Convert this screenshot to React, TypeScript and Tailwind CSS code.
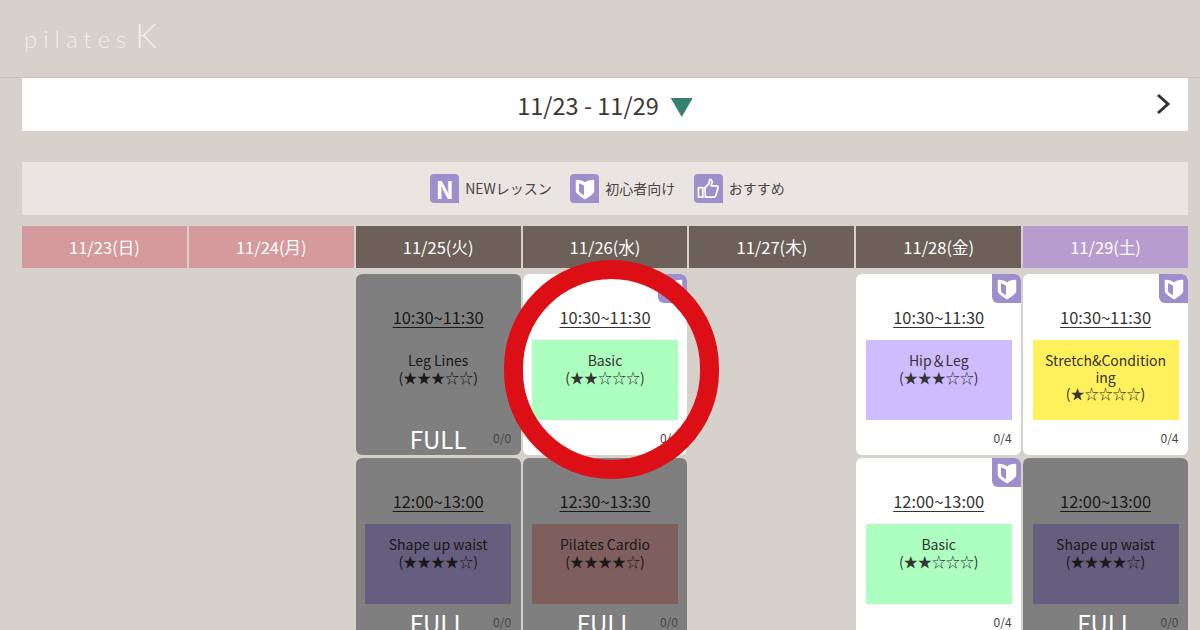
const font = { fontFamily: '"Noto Sans CJK JP", "Noto Sans", sans-serif' };

function BeginnerIcon({ className }: { className: string }) {
  return (
    <svg viewBox="0 0 20 22" className={className}>
      <path
        d="M1.500 2.500C5 2.500 8 3.500 10 5.500 12 3.500 15 2.500 18.500 2.500V13C18.500 15.500 14 18 10 20.500 6 18 1.500 15.500 1.500 13Z"
        fill="#fff"
        stroke="#fff"
        strokeWidth="1.500"
        strokeLinejoin="round"
      />
      <path d="M4 5.500C6 5.800 7.500 6.500 9 7.800V17.300C7 16 4 14.500 4 12.700Z" fill="#9d8fcb" />
    </svg>
  );
}

function ThumbIcon() {
  return (
    <svg viewBox="0 0 30 30" className="h-[26px] w-[28px]">
      <path
        d="M4 13.500h5v11H4zM11.500 13.500l4.500-4.500 1-5c2.600 0 3.300 2.500 2.300 5l-.8 2.500h6.300c1.800 0 2.200 1.700 1.500 3l-2.300 8c-.4 1.300-1.200 2-2.500 2h-9.500z"
        fill="none"
        stroke="#fff"
        strokeWidth="2"
        strokeLinejoin="round"
      />
    </svg>
  );
}

function Legend({ icon, label }: { icon: React.ReactNode; label: string }) {
  return (
    <div className="flex items-center gap-[6px]">
      <div className="flex h-[29px] w-[29px] items-center justify-center rounded-l-[4px] rounded-tr-[4px] bg-[#9d8fcb]">
        {icon}
      </div>
      <span className="text-[14px] text-[#4a4440]">{label}</span>
    </div>
  );
}

type Lesson = {
  time: string;
  name: string;
  stars: string;
  color: string;
  seats: string;
  full?: boolean;
  beginner?: boolean;
};

const columns: { date: string; head: string; lessons: Lesson[] }[] = [
  { date: "11/23(日)", head: "bg-[#d59a9b]", lessons: [] },
  { date: "11/24(月)", head: "bg-[#d59a9b]", lessons: [] },
  {
    date: "11/25(火)",
    head: "bg-[#6c6058]",
    lessons: [
      { time: "10:30~11:30", name: "Leg Lines", stars: "★★★☆☆", color: "", seats: "0/0", full: true },
      { time: "12:00~13:00", name: "Shape up waist", stars: "★★★★☆", color: "bg-[#cdbdff]", seats: "0/0", full: true },
    ],
  },
  {
    date: "11/26(水)",
    head: "bg-[#6c6058]",
    lessons: [
      { time: "10:30~11:30", name: "Basic", stars: "★★☆☆☆", color: "bg-[#adffc0]", seats: "0/4", beginner: true },
      { time: "12:30~13:30", name: "Pilates Cardio", stars: "★★★★☆", color: "bg-[#ffbdbd]", seats: "0/0", full: true },
    ],
  },
  { date: "11/27(木)", head: "bg-[#6c6058]", lessons: [] },
  {
    date: "11/28(金)",
    head: "bg-[#6c6058]",
    lessons: [
      { time: "10:30~11:30", name: "Hip＆Leg", stars: "★★★☆☆", color: "bg-[#cdbdff]", seats: "0/4", beginner: true },
      { time: "12:00~13:00", name: "Basic", stars: "★★☆☆☆", color: "bg-[#adffc0]", seats: "0/4", beginner: true },
    ],
  },
  {
    date: "11/29(土)",
    head: "bg-[#b79ccf]",
    lessons: [
      { time: "10:30~11:30", name: "Stretch&Conditioning", stars: "★☆☆☆☆", color: "bg-[#fff05c]", seats: "0/4", beginner: true },
      { time: "12:00~13:00", name: "Shape up waist", stars: "★★★★☆", color: "bg-[#cdbdff]", seats: "0/0", full: true },
    ],
  },
];

function LessonCard({ lesson }: { lesson: Lesson }) {
  return (
    <div className="relative h-[181px] shrink-0 overflow-hidden rounded-[6px] bg-white text-[#333]">
      {lesson.beginner && (
        <div className="absolute right-0 top-0 flex h-[29px] w-[29px] items-center justify-center rounded-bl-[6px] rounded-tr-[6px] bg-[#9d8fcb]">
          <BeginnerIcon className="h-[22px] w-[20px]" />
        </div>
      )}
      <div className="pt-[31px] text-center text-[16.400px] leading-[24px] underline underline-offset-[3px]">
        {lesson.time}
      </div>
      <div
        className={`mx-[9.500px] mt-[11px] h-[80px] break-all px-[11.500px] pt-[12px] text-center text-[14px] leading-[16.500px] ${lesson.color}`}
      >
        <div>{lesson.name}</div>
        <div>({lesson.stars})</div>
      </div>
      {lesson.full && <div className="absolute inset-0 bg-black/50" />}
      {lesson.full && (
        <div className="absolute bottom-0 left-0 right-0 text-center text-[24px] leading-[32px] text-white">FULL</div>
      )}
      <div className="absolute bottom-[8px] right-[9.500px] text-[12px] leading-[18px] text-[#444]">{lesson.seats}</div>
    </div>
  );
}

export default function App() {
  return (
    <div className="relative h-[630px] w-[1200px] overflow-hidden bg-[#d6d1cb]" style={font}>
      <header className="flex h-[78px] items-center border-b border-[#c4c0ba] pb-[3px] pl-[24px]">
        <div
          className="flex items-baseline font-light text-[#f1eeea]"
          style={{ fontFamily: '"Lato", sans-serif' }}
        >
          <span className="text-[24px] tracking-[6px]">pilates</span>
          <span className="ml-[3px] text-[34px] leading-none">K</span>
        </div>
      </header>

      <main className="pl-[22px] pr-[12px]">
        <div className="relative flex h-[53px] items-center justify-center gap-[12px] bg-white">
          <span className="pt-[2px] text-[23.500px] text-[#3c3836]">11/23 - 11/29</span>
          <div className="mt-[6px] h-[19px] w-[22px] bg-[#358271] [clip-path:polygon(0_0,100%_0,50%_100%)]" />
          <svg viewBox="0 0 20 24" className="absolute right-[15px] top-[14px] h-[24px] w-[20px]">
            <path d="M5 3l10 9-10 9" fill="none" stroke="#333" strokeWidth="3" />
          </svg>
        </div>

        <div className="mt-[31px] flex h-[53px] items-center justify-center gap-[18.500px] bg-[#e9e6e2] pl-[5px]">
          <Legend
            icon={<span className="text-[24px] font-bold leading-none text-white">N</span>}
            label="NEWレッスン"
          />
          <Legend icon={<BeginnerIcon className="h-[22px] w-[20px]" />} label="初心者向け" />
          <Legend icon={<ThumbIcon />} label="おすすめ" />
        </div>

        <div className="mt-[11px] grid grid-cols-7 gap-x-[2px]">
          {columns.map((col) => (
            <div key={col.date} className="flex min-w-0 flex-col">
              <div
                className={`flex h-[42px] items-center justify-center text-[16.500px] text-white ${col.head}`}
              >
                {col.date}
              </div>
              <div className="mt-[6px] flex flex-col gap-[3px]">
                {col.lessons.map((lesson) => (
                  <LessonCard key={lesson.time} lesson={lesson} />
                ))}
              </div>
            </div>
          ))}
        </div>
      </main>

      {/* red circle annotation */}
      <div className="pointer-events-none absolute left-[504px] top-[260px] h-[219px] w-[215px] rounded-full border-[19px] border-[#dd0f16]" />
    </div>
  );
}
